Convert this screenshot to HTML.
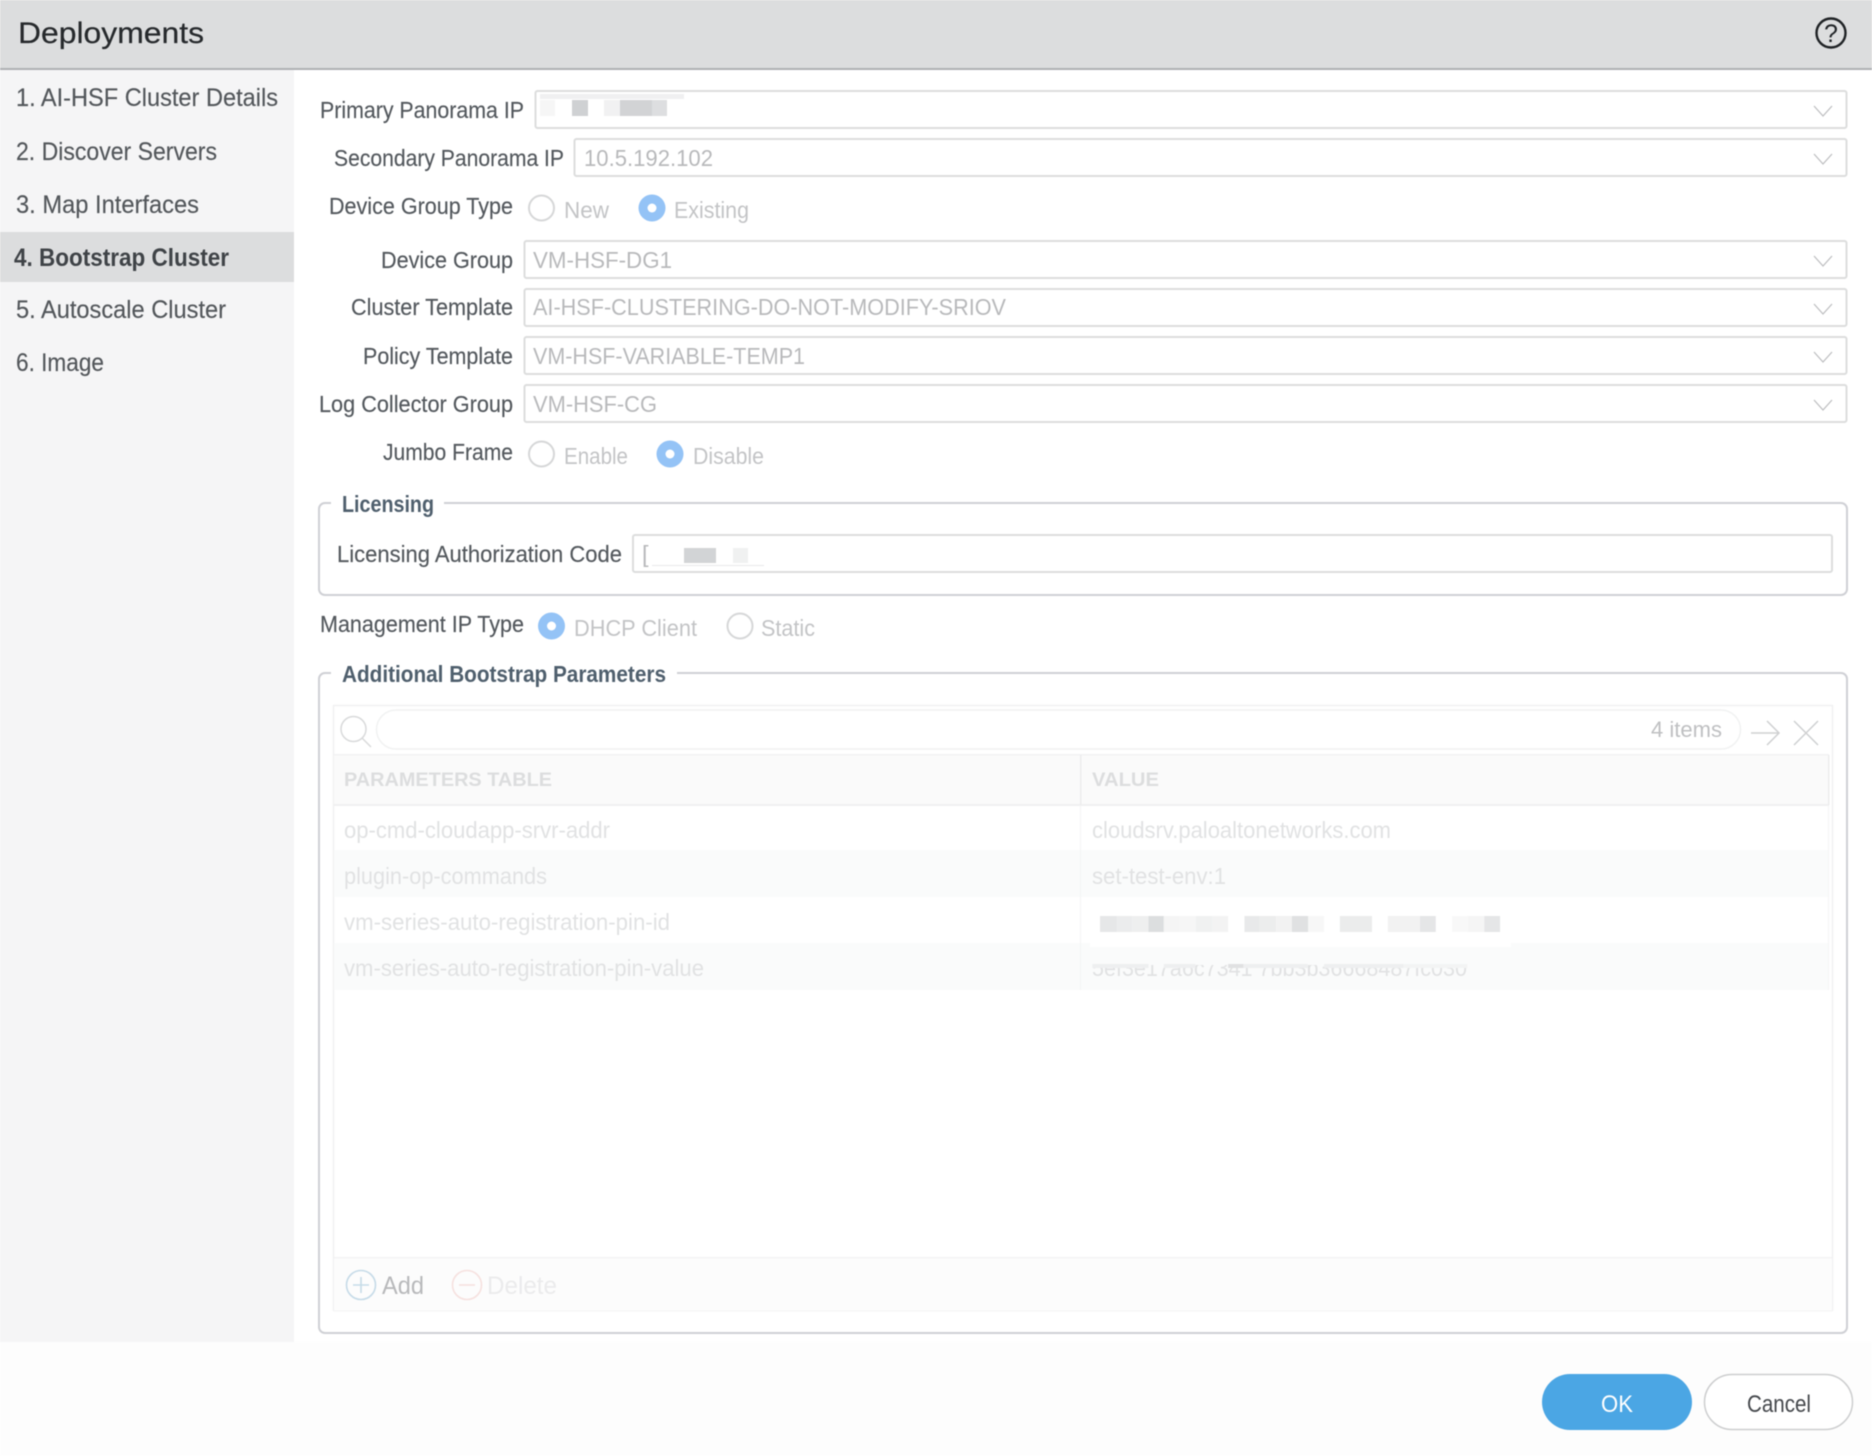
<!DOCTYPE html>
<html><head><meta charset="utf-8"><title>Deployments</title>
<style>
html,body{margin:0;padding:0;background:#fff;width:1872px;height:1456px;overflow:hidden}
svg{display:block;filter:blur(.45px)}
text{font-family:"Liberation Sans",sans-serif;white-space:pre}
.side{font-size:25px;fill:#53575b;stroke:#53575b;stroke-width:.15px}
.lab{font-size:23.5px;fill:#53585d;stroke:#53585d;stroke-width:.15px}
.val{font-size:23.5px;fill:#b8b9bb}
.rad{font-size:23.5px;fill:#c3c4c6}
.leg{font-size:23px;fill:#4f5f6d;font-weight:bold}
.cell{font-size:23.5px;fill:#e1e2e3}
.th{font-size:19.5px;fill:#dcddde;font-weight:bold}
.inp{fill:#fff;stroke:#dcdddd;stroke-width:2}
.chev{fill:none;stroke:#bcbdbf;stroke-width:1.2}
.ro{fill:#fff;stroke:#d6d7d8;stroke-width:2}
.rb{fill:#94c3f6}
.rd{fill:#fff}
.fs{fill:none;stroke:#cfd0d5;stroke-width:2}
</style></head>
<body>
<svg xmlns="http://www.w3.org/2000/svg" width="1872" height="1456" viewBox="0 0 1872 1456">
<defs><clipPath id="c4"><rect x="1085" y="965" width="440" height="14"/></clipPath></defs>
<rect width="1872" height="1456" fill="#fdfdfd"/>
<rect y="70" width="1872" height="1272" fill="#fff"/>
<!-- header -->
<rect width="1872" height="68" fill="#dcddde"/>
<rect y="68" width="1872" height="2" fill="#aeb0b3"/>
<text x="18" y="43" font-size="30" fill="#26292c" stroke="#26292c" stroke-width=".2" textLength="186" lengthAdjust="spacingAndGlyphs">Deployments</text>
<circle cx="1831" cy="33" r="14.5" fill="none" stroke="#1f2225" stroke-width="2.4"/>
<text x="1831" y="42" font-size="25" fill="#1f2225" text-anchor="middle">?</text>
<!-- sidebar -->
<rect y="70" width="294" height="1272" fill="#f5f5f6"/>
<rect y="232" width="294" height="50" fill="#dcddde"/>
<text class="side" x="16" y="106" textLength="262" lengthAdjust="spacingAndGlyphs">1. AI-HSF Cluster Details</text>
<text class="side" x="16" y="160" textLength="201" lengthAdjust="spacingAndGlyphs">2. Discover Servers</text>
<text class="side" x="16" y="213" textLength="183" lengthAdjust="spacingAndGlyphs">3. Map Interfaces</text>
<text class="side" x="14" y="266" textLength="215" lengthAdjust="spacingAndGlyphs" font-weight="bold" style="fill:#3f4347;stroke:none">4. Bootstrap Cluster</text>
<text class="side" x="16" y="318" textLength="210" lengthAdjust="spacingAndGlyphs">5. Autoscale Cluster</text>
<text class="side" x="16" y="371" textLength="88" lengthAdjust="spacingAndGlyphs">6. Image</text>
<!-- labels -->
<text class="lab" x="320" y="118" textLength="204" lengthAdjust="spacingAndGlyphs">Primary Panorama IP</text>
<text class="lab" x="334" y="166" textLength="230" lengthAdjust="spacingAndGlyphs">Secondary Panorama IP</text>
<text class="lab" x="329" y="214" textLength="184" lengthAdjust="spacingAndGlyphs">Device Group Type</text>
<text class="lab" x="381" y="268" textLength="132" lengthAdjust="spacingAndGlyphs">Device Group</text>
<text class="lab" x="351" y="315" textLength="162" lengthAdjust="spacingAndGlyphs">Cluster Template</text>
<text class="lab" x="363" y="364" textLength="150" lengthAdjust="spacingAndGlyphs">Policy Template</text>
<text class="lab" x="319" y="412" textLength="194" lengthAdjust="spacingAndGlyphs">Log Collector Group</text>
<text class="lab" x="383" y="460" textLength="130" lengthAdjust="spacingAndGlyphs">Jumbo Frame</text>
<!-- inputs -->
<rect class="inp" x="535.5" y="91" width="1311" height="37" rx="2"/>
<rect class="inp" x="574.5" y="139" width="1272" height="37" rx="2"/>
<rect class="inp" x="524.5" y="241" width="1322" height="37" rx="2"/>
<rect class="inp" x="524.5" y="289" width="1322" height="37" rx="2"/>
<rect class="inp" x="524.5" y="337" width="1322" height="37" rx="2"/>
<rect class="inp" x="524.5" y="385" width="1322" height="37" rx="2"/>
<path class="chev" d="M1814 106l9 10 9-10M1814 154l9 10 9-10M1814 256l9 10 9-10M1814 304l9 10 9-10M1814 352l9 10 9-10M1814 400l9 10 9-10"/>
<!-- primary redaction -->
<rect x="540" y="94" width="144" height="5" fill="#f0f0f1"/>
<rect x="540" y="100" width="15" height="16" fill="#f6f6f6"/>
<rect x="572" y="100" width="16" height="16" fill="#cfd1d3"/>
<rect x="604" y="100" width="16" height="16" fill="#f1f1f2"/>
<rect x="620" y="100" width="32" height="16" fill="#d2d3d5"/>
<rect x="652" y="100" width="15" height="16" fill="#dddee0"/>
<!-- values -->
<text class="val" x="584" y="166" textLength="129" lengthAdjust="spacingAndGlyphs">10.5.192.102</text>
<text class="val" x="533" y="268" textLength="139" lengthAdjust="spacingAndGlyphs">VM-HSF-DG1</text>
<text class="val" x="533" y="315" textLength="473" lengthAdjust="spacingAndGlyphs">AI-HSF-CLUSTERING-DO-NOT-MODIFY-SRIOV</text>
<text class="val" x="533" y="364" textLength="272" lengthAdjust="spacingAndGlyphs">VM-HSF-VARIABLE-TEMP1</text>
<text class="val" x="533" y="412" textLength="124" lengthAdjust="spacingAndGlyphs">VM-HSF-CG</text>
<!-- radios -->
<circle class="ro" cx="541.5" cy="208" r="12.5"/>
<text class="rad" x="564" y="218" textLength="45" lengthAdjust="spacingAndGlyphs">New</text>
<circle class="rb" cx="652" cy="208" r="13.5"/><circle class="rd" cx="652" cy="208" r="4.5"/>
<text class="rad" x="674" y="218" textLength="75" lengthAdjust="spacingAndGlyphs">Existing</text>
<circle class="ro" cx="541.5" cy="454" r="12.5"/>
<text class="rad" x="564" y="464" textLength="64" lengthAdjust="spacingAndGlyphs">Enable</text>
<circle class="rb" cx="670" cy="454" r="13.5"/><circle class="rd" cx="670" cy="454" r="4.5"/>
<text class="rad" x="693" y="464" textLength="71" lengthAdjust="spacingAndGlyphs">Disable</text>
<!-- licensing -->
<path class="fs" d="M331 503h-6a6 6 0 0 0-6 6v80a6 6 0 0 0 6 6h1516a6 6 0 0 0 6-6v-80a6 6 0 0 0-6-6H444"/>
<text class="leg" x="342" y="512" textLength="92" lengthAdjust="spacingAndGlyphs">Licensing</text>
<text class="lab" x="337" y="562" textLength="285" lengthAdjust="spacingAndGlyphs">Licensing Authorization Code</text>
<rect class="inp" x="633" y="535" width="1199" height="37" rx="2"/>
<text class="val" x="642" y="562" font-size="20">[</text>
<rect x="650" y="545" width="114" height="20" fill="#fff"/>
<rect x="684" y="548" width="32" height="15" fill="#d2d4d6"/>
<rect x="733" y="548" width="15" height="15" fill="#f0f1f1"/>
<rect x="652" y="565" width="112" height="1" fill="#e8e9ea"/>
<!-- management -->
<text class="lab" x="320" y="632" textLength="204" lengthAdjust="spacingAndGlyphs">Management IP Type</text>
<circle class="rb" cx="551.5" cy="626" r="13.5"/><circle class="rd" cx="551.5" cy="626" r="4.5"/>
<text class="rad" x="574" y="636" textLength="123" lengthAdjust="spacingAndGlyphs">DHCP Client</text>
<circle class="ro" cx="740" cy="626" r="12.5"/>
<text class="rad" x="761" y="636" textLength="54" lengthAdjust="spacingAndGlyphs">Static</text>
<!-- additional -->
<path class="fs" d="M331 673h-6a6 6 0 0 0-6 6v648a6 6 0 0 0 6 6h1516a6 6 0 0 0 6-6V679a6 6 0 0 0-6-6H677"/>
<text class="leg" x="342" y="682" textLength="324" lengthAdjust="spacingAndGlyphs">Additional Bootstrap Parameters</text>
<!-- grid -->
<rect x="333.5" y="705.5" width="1499" height="605" fill="#fff" stroke="#f1f1f2" stroke-width="1.5"/>
<rect x="376.5" y="710" width="1364" height="39" rx="19.5" fill="#fff" stroke="#f1f2f2" stroke-width="1.5"/>
<circle cx="353.5" cy="729" r="12.5" fill="none" stroke="#d9dadb" stroke-width="1.5"/>
<path d="M362 738l9 9" fill="none" stroke="#d9dadb" stroke-width="1.5"/>
<text x="1651" y="737" font-size="22" fill="#bfc0c2" textLength="71" lengthAdjust="spacingAndGlyphs">4 items</text>
<path d="M1751 733h28M1767 721l12 12-12 12M1794 721l24 24M1818 721l-24 24" fill="none" stroke="#cfd0d1" stroke-width="1.5"/>
<rect x="334" y="755" width="1495" height="50" fill="#fafafa"/>
<rect x="334" y="804" width="1495" height="2" fill="#f0f0f1"/>
<rect x="334" y="754" width="1495" height="1.5" fill="#f2f2f3"/>
<rect x="1080" y="755" width="1.5" height="50" fill="#ececed"/>
<rect x="1828" y="755" width="1.5" height="50" fill="#ececed"/>
<text class="th" x="344" y="786" textLength="208" lengthAdjust="spacingAndGlyphs">PARAMETERS TABLE</text>
<text class="th" x="1092" y="786" textLength="67" lengthAdjust="spacingAndGlyphs">VALUE</text>
<rect x="334" y="850" width="1495" height="47" fill="#fafbfb"/>
<rect x="334" y="943" width="1495" height="47" fill="#fafbfb"/>
<rect x="1080" y="806" width="1" height="184" fill="#f4f4f5"/>
<rect x="1828" y="806" width="1" height="184" fill="#f4f4f5"/>
<text class="cell" x="344" y="838" textLength="266" lengthAdjust="spacingAndGlyphs">op-cmd-cloudapp-srvr-addr</text>
<text class="cell" x="344" y="884" textLength="203" lengthAdjust="spacingAndGlyphs">plugin-op-commands</text>
<text class="cell" x="344" y="930" textLength="326" lengthAdjust="spacingAndGlyphs">vm-series-auto-registration-pin-id</text>
<text class="cell" x="344" y="976" textLength="360" lengthAdjust="spacingAndGlyphs">vm-series-auto-registration-pin-value</text>
<text class="cell" x="1092" y="838" textLength="299" lengthAdjust="spacingAndGlyphs">cloudsrv.paloaltonetworks.com</text>
<text class="cell" x="1092" y="884" textLength="134" lengthAdjust="spacingAndGlyphs">set-test-env:1</text>
<text class="cell" x="1092" y="976" textLength="375" lengthAdjust="spacingAndGlyphs" clip-path="url(#c4)">5ef3e17a6c7341 7bb3b36668487fc030</text>
<!-- row 3 / row 4 redaction -->
<rect x="1090" y="897" width="421" height="50" fill="#fff"/>
<g transform="translate(1072 916) scale(.5102 1)">
<rect x="55" width="33" height="16" fill="#e6e7e8"/><rect x="88" width="30" height="16" fill="#ebeced"/><rect x="118" width="32" height="16" fill="#eeefef"/><rect x="150" width="30" height="16" fill="#dcdedf"/><rect x="180" width="32" height="16" fill="#f5f5f5"/><rect x="212" width="31" height="16" fill="#f6f6f6"/><rect x="243" width="32" height="16" fill="#f0f1f1"/><rect x="275" width="31" height="16" fill="#f3f3f3"/>
<rect x="338" width="30" height="16" fill="#e8e9ea"/><rect x="368" width="32" height="16" fill="#eceded"/><rect x="400" width="31" height="16" fill="#f2f2f2"/><rect x="431" width="32" height="16" fill="#e0e1e2"/><rect x="463" width="31" height="16" fill="#f7f7f7"/>
<rect x="525" width="63" height="16" fill="#ebecec"/>
<rect x="619" width="63" height="16" fill="#f2f2f2"/><rect x="682" width="31" height="16" fill="#e5e6e7"/>
<rect x="745" width="31" height="16" fill="#f8f8f8"/><rect x="776" width="32" height="16" fill="#f5f5f5"/><rect x="808" width="31" height="16" fill="#e5e6e7"/>
</g>
<g transform="translate(1072 964) scale(.5102 1)" fill="#eeeff0">
<rect x="40" width="110" height="4"/><rect x="180" width="62" height="4"/><rect x="306" width="30" height="4" fill="#e0e1e2"/><rect x="336" width="126" height="4"/><rect x="494" width="156" height="4"/><rect x="650" width="125" height="4" fill="#f3f4f4"/>
</g>
<!-- footer of grid -->
<rect x="334" y="1257" width="1498" height="53.5" fill="#fcfcfc"/>
<rect x="334" y="1257" width="1498" height="1.5" fill="#f3f3f4"/>
<circle cx="361" cy="1285" r="14.5" fill="none" stroke="#c6dbe8" stroke-width="1.6"/>
<path d="M361 1277v16M353 1285h16" fill="none" stroke="#c6dbe8" stroke-width="1.6"/>
<text x="382" y="1294" font-size="25" fill="#b8b9bb" textLength="42" lengthAdjust="spacingAndGlyphs">Add</text>
<circle cx="467" cy="1285" r="14.5" fill="none" stroke="#f6e1df" stroke-width="1.6"/>
<path d="M459 1285h16" fill="none" stroke="#f6e1df" stroke-width="1.6"/>
<text x="487" y="1294" font-size="25" fill="#ebebec" textLength="70" lengthAdjust="spacingAndGlyphs">Delete</text>
<!-- buttons -->
<rect x="1542" y="1374" width="150" height="56" rx="28" fill="#4ba6e4"/>
<text x="1601" y="1412" font-size="24" fill="#fff" textLength="32" lengthAdjust="spacingAndGlyphs">OK</text>
<rect x="1704.5" y="1374.5" width="148" height="55" rx="27.5" fill="#fff" stroke="#cdcecf" stroke-width="1.5"/>
<text x="1747" y="1412" font-size="24" fill="#45484c" textLength="64" lengthAdjust="spacingAndGlyphs">Cancel</text>
</svg>
</body></html>
